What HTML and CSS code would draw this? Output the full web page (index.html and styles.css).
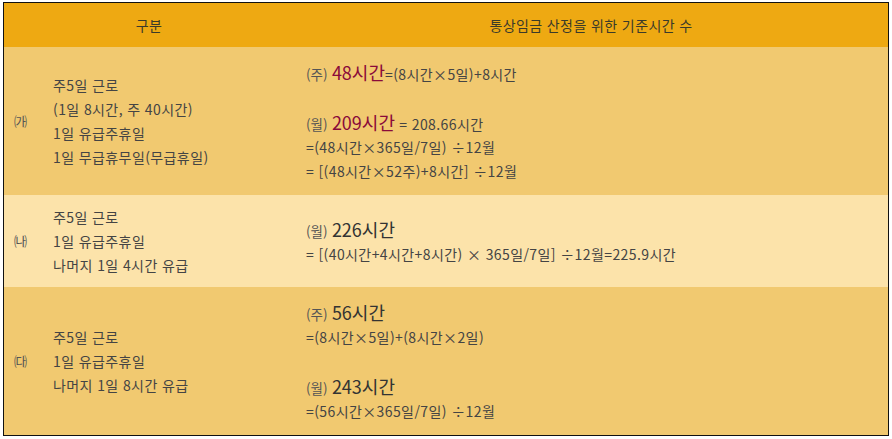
FILE: index.html
```html
<!DOCTYPE html>
<html lang="ko">
<head>
<meta charset="utf-8">
<title>통상임금 산정을 위한 기준시간 수</title>
<link rel="stylesheet" href="styles.css">
</head>
<body>
<table class="hours">
  <colgroup>
    <col class="c-lbl">
    <col class="c-desc">
    <col class="c-calc">
  </colgroup>
  <thead>
    <tr>
      <th colspan="2">구분</th>
      <th>통상임금 산정을 위한 기준시간 수</th>
    </tr>
  </thead>
  <tbody>
    <tr class="row row-a">
      <td class="lbl">㈎</td>
      <td class="desc">주5일 근로<br>(1일 8시간, 주 40시간)<br>1일 유급주휴일<br>1일 무급휴무일(무급휴일)</td>
      <td class="calc">
        <div class="big-line"><span class="unit">(주)</span> <span class="num red">48시간</span>=(8시간×5일)+8시간</div>
        <div class="blank"></div>
        <div class="big-line"><span class="unit">(월)</span> <span class="num red">209시간</span> = 208.66시간</div>
        <div class="line">=(48시간×365일/7일) ÷12월</div>
        <div class="line">= [(48시간×52주)+8시간] ÷12월</div>
      </td>
    </tr>
    <tr class="row row-b">
      <td class="lbl">㈏</td>
      <td class="desc">주5일 근로<br>1일 유급주휴일<br>나머지 1일 4시간 유급</td>
      <td class="calc">
        <div class="big-line"><span class="unit">(월)</span> <span class="num">226시간</span></div>
        <div class="line">= [(40시간+4시간+8시간) × 365일/7일] ÷12월=225.9시간</div>
      </td>
    </tr>
    <tr class="row row-c">
      <td class="lbl">㈐</td>
      <td class="desc">주5일 근로<br>1일 유급주휴일<br>나머지 1일 8시간 유급</td>
      <td class="calc">
        <div class="big-line"><span class="unit">(주)</span> <span class="num">56시간</span></div>
        <div class="line">=(8시간×5일)+(8시간×2일)</div>
        <div class="blank"></div>
        <div class="big-line"><span class="unit">(월)</span> <span class="num">243시간</span></div>
        <div class="line">=(56시간×365일/7일) ÷12월</div>
      </td>
    </tr>
  </tbody>
</table>
</body>
</html>
```
FILE: styles.css
```css
html, body {
  margin: 0;
  padding: 0;
  background: #ffffff;
}
body {
  padding: 2px 3px;
  font-family: "Noto Sans CJK KR", "Noto Sans", sans-serif;
  font-size: 14px;
  letter-spacing: 0.4px;
  color: #444;
}
.hours {
  width: 886px;
  border-collapse: separate;
  border-spacing: 0;
  border: 1px solid #111;
  table-layout: fixed;
}
.c-lbl { width: 39px; }
.c-desc { width: 251px; }
.hours th {
  height: 44px;
  padding: 0;
  background: #eea912;
  font-weight: normal;
  color: #3a3a2a;
  text-align: center;
  vertical-align: middle;
}
.hours td {
  padding: 0;
  vertical-align: middle;
  line-height: 24px;
}
.row-a td, .row-c td { background: #f1c970; }
.row-b td { background: #fce3aa; }
.row-a td { height: 148px; }
.row-b td { height: 92px; }
.row-c td { height: 148px; }
.lbl {
  padding-left: 10px !important;
  font-size: 13px;
  letter-spacing: 0;
  color: #555;
}
.desc {
  padding-left: 10px !important;
}
.calc {
  padding-left: 12px !important;
}
.big-line {
  height: 26px;
  line-height: 26px;
}
.line {
  height: 24px;
  line-height: 24px;
}
.blank { height: 24px; }
.unit {
  font-size: 13.5px;
  letter-spacing: 0;
  color: #555;
}
.num {
  font-size: 18px;
  letter-spacing: 0;
  color: #333;
}
.num.red { color: #8a0a3a; }
```
